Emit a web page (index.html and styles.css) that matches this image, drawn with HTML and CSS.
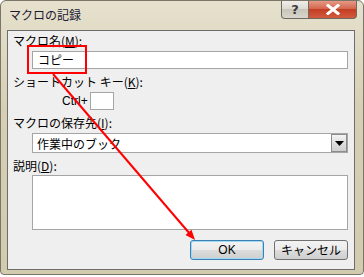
FILE: index.html
```html
<!DOCTYPE html>
<html lang="ja">
<head>
  <meta charset="UTF-8" />
  <title>マクロの記録</title>
  <link rel="stylesheet" href="styles.css">
</head>
<body>
  <div class="ventana">
    <div class="titulo">
      <span class="titulo-texto">マクロの記録</span>
      <div class="titulo-botones">
        <span class="btn-ayuda">?</span>
        <span class="btn-cerrar">
          <svg width="14" height="11" viewBox="0 0 14 11">
            <path d="M2 1.5 L12 9.5 M12 1.5 L2 9.5" stroke="#fff" stroke-width="3" stroke-linecap="square" />
          </svg>
        </span>
      </div>
    </div>

    <div class="cliente">
      <div class="etiqueta primera">マクロ名(<u>M</u>):</div>
      <div class="campo campo-nombre">コピー</div>

      <div class="etiqueta">ショートカット キー(<u>K</u>):</div>
      <div class="fila-ctrl">
        <span>Ctrl+</span>
        <div class="campo campo-tecla"></div>
      </div>

      <div class="etiqueta">マクロの保存先(<u>I</u>):</div>
      <div class="campo combo">
        <span>作業中のブック</span>
        <span class="combo-flecha">
          <svg width="9" height="5" viewBox="0 0 9 5"><path d="M0 0 H9 L4.5 5 Z" fill="#000" /></svg>
        </span>
      </div>

      <div class="etiqueta">説明(<u>D</u>):</div>
      <div class="campo descripcion"></div>

      <div class="botones">
        <button class="boton boton-ok">OK</button>
        <button class="boton">キャンセル</button>
      </div>
    </div>

    <!-- Marcas en rojo encima del dialogo -->
    <svg class="marcas" width="364" height="277" viewBox="0 0 364 277">
      <rect x="28" y="46" width="58" height="27" fill="none" stroke="#f00" stroke-width="2" />
      <line x1="53" y1="74" x2="190" y2="234" stroke="#f00" stroke-width="2" />
      <polygon points="195,240 191.5,229.8 185.5,235" fill="#f00" />
    </svg>
  </div>
</body>
</html>
```

FILE: styles.css
```css
body {
  margin: 0;
  padding: 0;
  background: #fff;
  font-family: "Noto Sans CJK JP", sans-serif;
  font-size: 12px;
  color: #000;
}

.ventana {
  position: relative;
  width: 364px;
  height: 275px;
  box-sizing: border-box;
  border: 1px solid #7a7566;
  border-radius: 6px 6px 4px 4px;
  background: linear-gradient(#e6e1cd, #d6cfb4 40%, #d2cbae);
  overflow: hidden;
}

.titulo {
  display: flex;
  justify-content: space-between;
  align-items: flex-start;
  height: 29px;
}

.titulo-texto {
  margin: 6px 0 0 8px;
  font-size: 12px;
  line-height: 16px;
  color: #1b1b33;
}

.titulo-botones {
  display: flex;
  margin-right: 6px;
  margin-top: -1px;
}

.btn-ayuda,
.btn-cerrar {
  display: flex;
  align-items: center;
  justify-content: center;
  height: 19px;
  box-sizing: border-box;
  border: 1px solid #6c6a61;
  border-top: none;
}

.btn-ayuda {
  width: 28px;
  border-radius: 0 0 0 4px;
  background: linear-gradient(#f2f1ec, #dcdad2 50%, #c8c5b8 51%, #d8d6cc);
  font-family: "DejaVu Sans", sans-serif;
  font-weight: bold;
  font-size: 13px;
  color: #3b3b3b;
}

.btn-cerrar {
  width: 48px;
  border-left: none;
  border-radius: 0 0 4px 0;
  background: linear-gradient(#e7a08c, #d4644c 50%, #c23d22 51%, #d35a3e);
}

.cliente {
  display: flex;
  flex-direction: column;
  align-items: flex-start;
  height: 240px;
  margin: 0 8px 0 6px;
  padding: 0 6px 0 5px;
  box-sizing: border-box;
  border: 1px solid #6d6d6d;
  background: #efefef;
}

.etiqueta {
  margin-top: 6px;
  line-height: 14px;
  height: 14px;
  white-space: nowrap;
}

.etiqueta.primera {
  margin-top: 3px;
}

.etiqueta u {
  text-underline-offset: 1px;
}

.campo {
  box-sizing: border-box;
  border: 1px solid #a5a5a5;
  background: #fff;
}

.campo-nombre {
  align-self: stretch;
  margin: 3px 0 0 19px;
  height: 18px;
  padding: 0 5px;
  line-height: 16px;
}

.fila-ctrl {
  display: flex;
  align-items: center;
  margin: 3px 0 0 49px;
  gap: 2px;
}

.fila-ctrl span {
  font-family: "Liberation Sans", sans-serif;
  font-size: 12px;
}

.campo-tecla {
  width: 24px;
  height: 18px;
}

.combo {
  display: flex;
  justify-content: space-between;
  align-items: center;
  align-self: stretch;
  margin: 3px 0 0 19px;
  height: 20px;
  padding-left: 4px;
}

.combo-flecha {
  display: flex;
  align-items: center;
  justify-content: center;
  width: 16px;
  height: 18px;
  box-sizing: border-box;
  border: 1px solid #8c8c8c;
  background: linear-gradient(#f4f4f4, #dedede 50%, #cfcfcf);
}

.descripcion {
  align-self: stretch;
  margin: 2px 0 0 19px;
  height: 55px;
}

.botones {
  display: flex;
  align-self: stretch;
  justify-content: flex-end;
  gap: 10px;
  margin-top: 10px;
}

.boton {
  width: 74px;
  height: 20px;
  padding: 0;
  border: 1px solid #707070;
  border-radius: 3px;
  background: linear-gradient(#f3f3f3, #ebebeb 50%, #dcdcdc 51%, #cfcfcf);
  font-family: "Noto Sans CJK JP", sans-serif;
  font-size: 12px;
  line-height: 16px;
  color: #000;
}

.boton-ok {
  border-color: #3c7fb1;
  box-shadow: inset 0 0 0 1px #9fdaf5;
  font-family: "Liberation Sans", sans-serif;
}

.marcas {
  position: absolute;
  top: -1px;
  left: -1px;
  pointer-events: none;
}
```
